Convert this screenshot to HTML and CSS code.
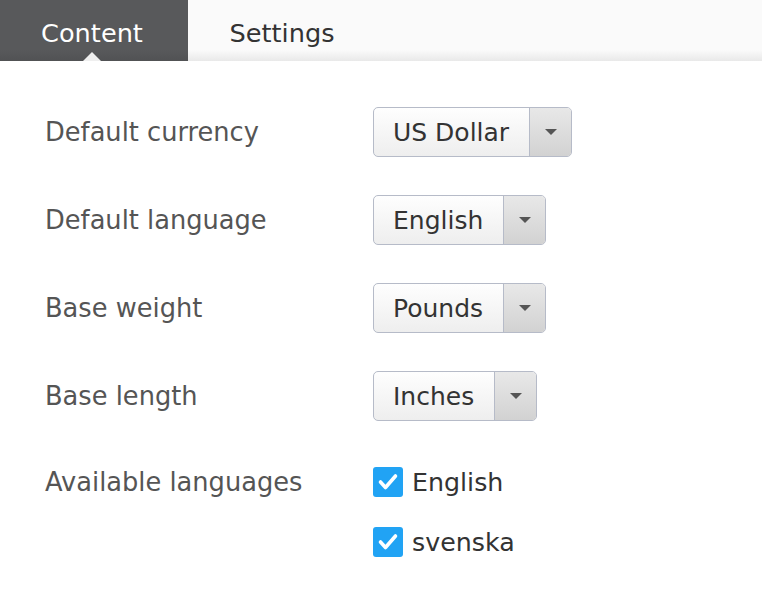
FILE: index.html
```html
<!DOCTYPE html>
<html lang="en">
<head>
<meta charset="utf-8">
<title>Content settings</title>
<link rel="stylesheet" href="styles.css">
</head>
<body>
<nav class="tabs">
  <div class="tab tab-active">Content<span class="tab-caret"></span></div>
  <div class="tab">Settings</div>
</nav>
<main class="form">
  <div class="label">Default currency</div>
  <div class="select"><span class="select-value">US Dollar</span><span class="select-arrow"><span class="caret"></span></span></div>

  <div class="label">Default language</div>
  <div class="select"><span class="select-value">English</span><span class="select-arrow"><span class="caret"></span></span></div>

  <div class="label">Base weight</div>
  <div class="select"><span class="select-value">Pounds</span><span class="select-arrow"><span class="caret"></span></span></div>

  <div class="label">Base length</div>
  <div class="select"><span class="select-value">Inches</span><span class="select-arrow"><span class="caret"></span></span></div>

  <div class="label label-top">Available languages</div>
  <div class="checks">
    <label class="check"><span class="box"><svg viewBox="0 0 30 30" width="30" height="30"><polyline points="7.5,15 12.5,20.5 22.5,9" fill="none" stroke="#fff" stroke-width="3.6" stroke-linecap="round" stroke-linejoin="round"/></svg></span>English</label>
    <label class="check"><span class="box"><svg viewBox="0 0 30 30" width="30" height="30"><polyline points="7.5,15 12.5,20.5 22.5,9" fill="none" stroke="#fff" stroke-width="3.6" stroke-linecap="round" stroke-linejoin="round"/></svg></span>svenska</label>
  </div>
</main>
</body>
</html>
```
FILE: styles.css
```css
html, body {
  margin: 0;
  padding: 0;
  background: #fff;
}
body {
  font-family: "DejaVu Sans", Verdana, sans-serif;
  font-size: 25px;
  color: #333;
}
.tabs {
  display: flex;
  height: 61px;
  background: linear-gradient(to bottom, #fafafa 0, #fafafa 50px, #e9e9e9 61px);
}
.tab {
  position: relative;
  width: 188px;
  display: flex;
  align-items: center;
  justify-content: center;
  padding-top: 5px;
  box-sizing: border-box;
  font-size: 25.6px;
  color: #333;
}
.tab-active {
  background: linear-gradient(to bottom, #58595b 0, #58595b 50px, #515254 61px);
  color: #fff;
  padding-right: 4px;
}
.tab-caret {
  position: absolute;
  left: 83px;
  bottom: 0;
  width: 0;
  height: 0;
  border-left: 9px solid transparent;
  border-right: 9px solid transparent;
  border-bottom: 9px solid #efefef;
}
.form {
  display: grid;
  grid-template-columns: 328px auto;
  row-gap: 38px;
  padding: 46px 0 0 45px;
  justify-items: start;
}
.label {
  line-height: 50px;
  font-size: 25.7px;
  color: #555;
  align-self: center;
}
.label-top {
  line-height: 46px;
  align-self: start;
}
.select {
  display: flex;
  height: 50px;
  box-sizing: border-box;
  border: 1px solid #b6bbc8;
  border-radius: 5px;
  background: linear-gradient(to bottom, #fefefe, #eeeeee);
  overflow: hidden;
}
.select-value {
  display: flex;
  align-items: center;
  padding: 0 20px 0 19px;
  color: #333;
}
.select-arrow {
  width: 41px;
  display: flex;
  align-items: center;
  justify-content: center;
  border-left: 1px solid #b6bbc8;
  background: linear-gradient(to bottom, #e8e8e8, #d2d2d2);
}
.caret {
  width: 0;
  height: 0;
  border-left: 6px solid transparent;
  border-right: 6px solid transparent;
  border-top: 6px solid #555;
}
.checks {
  display: flex;
  flex-direction: column;
  gap: 14px;
}
.check {
  display: flex;
  align-items: center;
  height: 46px;
  gap: 9px;
  font-size: 25.3px;
  color: #333;
}
.box {
  width: 30px;
  height: 30px;
  border-radius: 3px;
  background: #21a3f4;
  display: block;
}
.box svg {
  display: block;
}
```
